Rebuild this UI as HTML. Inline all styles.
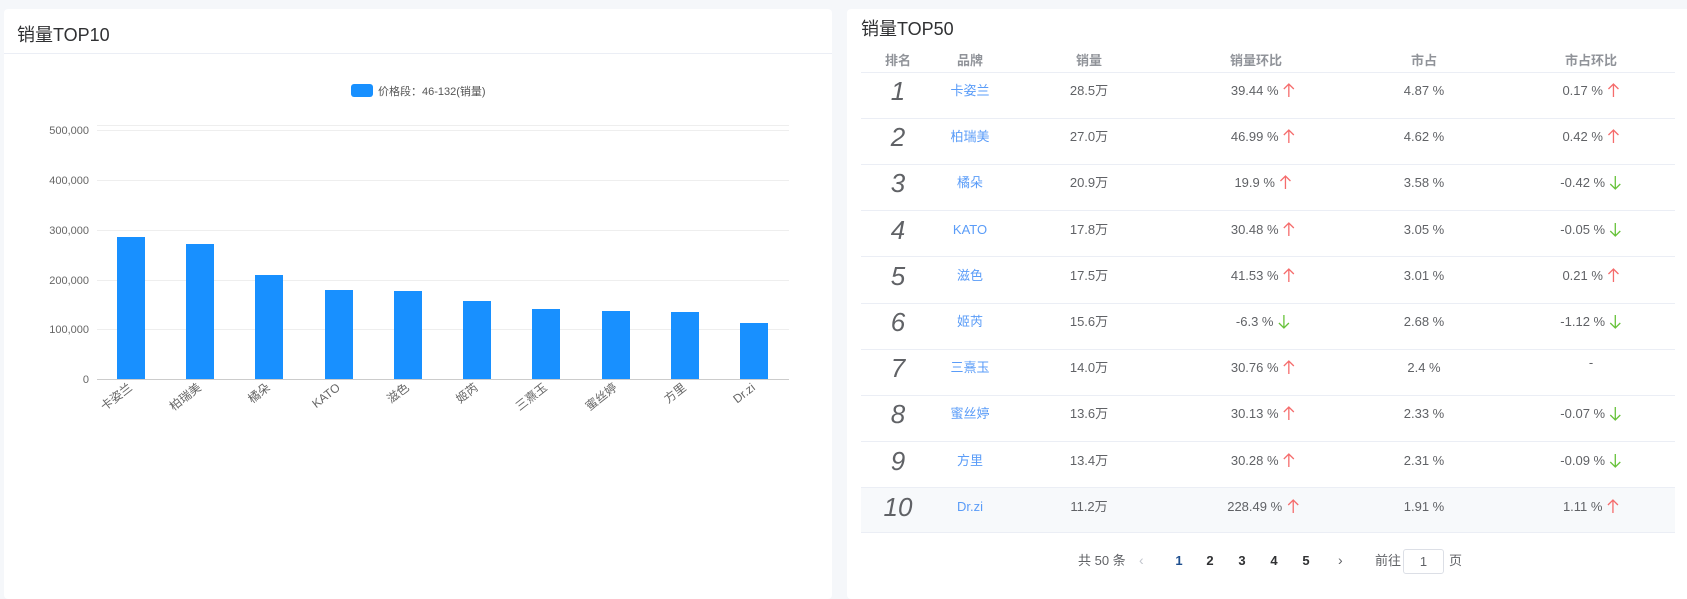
<!DOCTYPE html>
<html><head><meta charset="utf-8"><style>
*{margin:0;padding:0;box-sizing:border-box}
body{width:1687px;height:590px;background:#f5f7fa;font-family:"Liberation Sans","Noto Sans CJK SC",sans-serif;position:relative;overflow:hidden;color:#606266}
.card{position:absolute;background:#fff;border-radius:4px}
.a{position:absolute;white-space:nowrap}
.c{transform:translateX(-50%)}
.hd{color:#909399;font-size:13px;font-weight:bold;top:50px}
.row{position:absolute;left:861px;width:814px;height:46px;border-bottom:1px solid #ebeef5}
.rk{font-style:italic;font-size:26px;color:#606266}
.br{color:#5a9cf8;font-size:13px;line-height:16px;height:16px}
.t{font-size:13px;color:#606266;line-height:16px;height:16px}
svg.ar{vertical-align:-3px;margin-left:1px}
</style></head><body>
<div class="card" style="left:4px;top:9px;width:828px;height:590px">
<div class="a" style="left:13px;top:12px;font-size:18px;color:#303133">销量TOP10</div>
<div style="position:absolute;left:0;top:44px;width:828px;border-top:1px solid #ebeef5"></div>
</div>
<svg class="a" style="left:0;top:0" width="840" height="590">
<rect x="351" y="84" width="22" height="13" rx="3" fill="#1890ff"/>
<text x="378" y="95" font-size="11" fill="#555" font-family="Liberation Sans,Noto Sans CJK SC,sans-serif">价格段：46-132(销量)</text>
<g stroke="#eee" stroke-width="1">
<line x1="97" y1="130.5" x2="789" y2="130.5"/><line x1="97" y1="180.5" x2="789" y2="180.5"/><line x1="97" y1="230.5" x2="789" y2="230.5"/><line x1="97" y1="280.5" x2="789" y2="280.5"/><line x1="97" y1="329.5" x2="789" y2="329.5"/>
<line x1="97" y1="125.5" x2="789" y2="125.5"/>
</g>
<line x1="97" y1="379.5" x2="789" y2="379.5" stroke="#ccc"/>
<g font-size="11" fill="#666" text-anchor="end" font-family="Liberation Sans,sans-serif">
<text x="89" y="134">500,000</text><text x="89" y="184">400,000</text><text x="89" y="234">300,000</text><text x="89" y="284">200,000</text><text x="89" y="333">100,000</text><text x="89" y="383">0</text>
</g>
<g fill="#1890ff">
<rect x="117" y="237" width="28" height="142"/>
<rect x="186" y="244" width="28" height="135"/>
<rect x="255" y="275" width="28" height="104"/>
<rect x="325" y="290" width="28" height="89"/>
<rect x="394" y="291" width="28" height="88"/>
<rect x="463" y="301" width="28" height="78"/>
<rect x="532" y="309" width="28" height="70"/>
<rect x="602" y="311" width="28" height="68"/>
<rect x="671" y="312" width="28" height="67"/>
<rect x="740" y="323" width="28" height="56"/>
</g>
<g font-size="12" fill="#666" text-anchor="end" font-family="Liberation Sans,Noto Sans CJK SC,sans-serif">
<text transform="translate(133,389) rotate(-38)">卡姿兰</text>
<text transform="translate(202,389) rotate(-38)">柏瑞美</text>
<text transform="translate(271,389) rotate(-38)">橘朵</text>
<text transform="translate(341,389) rotate(-38)">KATO</text>
<text transform="translate(410,389) rotate(-38)">滋色</text>
<text transform="translate(479,389) rotate(-38)">姬芮</text>
<text transform="translate(548,389) rotate(-38)">三熹玉</text>
<text transform="translate(618,389) rotate(-38)">蜜丝婷</text>
<text transform="translate(687,389) rotate(-38)">方里</text>
<text transform="translate(756,389) rotate(-38)">Dr.zi</text>
</g>
</svg>

<div class="card" style="left:847px;top:9px;width:845px;height:590px"></div>
<div class="a" style="left:861px;top:15px;font-size:18px;color:#303133">销量TOP50</div>
<div class="a hd c" style="left:898px">排名</div>
<div class="a hd c" style="left:970px">品牌</div>
<div class="a hd c" style="left:1089px">销量</div>
<div class="a hd c" style="left:1256px">销量环比</div>
<div class="a hd c" style="left:1424px">市占</div>
<div class="a hd c" style="left:1591px">市占环比</div>
<div style="position:absolute;left:861px;top:72px;width:814px;border-top:1px solid #ebeef5"></div>

<div class="row" style="top:73px"></div>
<div class="row" style="top:119px"></div>
<div class="row" style="top:165px"></div>
<div class="row" style="top:211px"></div>
<div class="row" style="top:258px"></div>
<div class="row" style="top:304px"></div>
<div class="row" style="top:350px"></div>
<div class="row" style="top:396px"></div>
<div class="row" style="top:442px"></div>
<div class="row" style="top:488px;background:#f7f9fb;height:45px"></div>

<div id="rows"></div>
<script>
var d=[["1","卡姿兰","28.5万","39.44 %",1,"4.87 %","0.17 %",1],["2","柏瑞美","27.0万","46.99 %",1,"4.62 %","0.42 %",1],["3","橘朵","20.9万","19.9 %",1,"3.58 %","-0.42 %",0],["4","KATO","17.8万","30.48 %",1,"3.05 %","-0.05 %",0],["5","滋色","17.5万","41.53 %",1,"3.01 %","0.21 %",1],["6","姬芮","15.6万","-6.3 %",0,"2.68 %","-1.12 %",0],["7","三熹玉","14.0万","30.76 %",1,"2.4 %","-",2],["8","蜜丝婷","13.6万","30.13 %",1,"2.33 %","-0.07 %",0],["9","方里","13.4万","30.28 %",1,"2.31 %","-0.09 %",0],["10","Dr.zi","11.2万","228.49 %",1,"1.91 %","1.11 %",1]];
function ar(v){
 if(v==1)return '<svg class="ar" width="12" height="15" viewBox="0 0 12 15"><path d="M6 14V1M1 6l5-5 5 5" fill="none" stroke="#f56c6c" stroke-width="1.3"/></svg>';
 if(v==0)return '<svg class="ar" width="12" height="15" viewBox="0 0 12 15"><path d="M6 1v13M1 9l5 5 5-5" fill="none" stroke="#67c23a" stroke-width="1.3"/></svg>';
 return '';}
var h="";
for(var i=0;i<10;i++){var r=d[i],y=92+i*46.2,ty=y-9;
h+='<div class="a c rk" style="left:898px;top:'+(y-16)+'px">'+r[0]+'</div>';
h+='<div class="a c br" style="left:970px;top:'+ty+'px">'+r[1]+'</div>';
h+='<div class="a c t" style="left:1089px;top:'+ty+'px">'+r[2]+'</div>';
h+='<div class="a c t" style="left:1263px;top:'+ty+'px">'+r[3]+' '+ar(r[4])+'</div>';
h+='<div class="a c t" style="left:1424px;top:'+ty+'px">'+r[5]+'</div>';
h+='<div class="a c t" style="left:1591px;top:'+(r[7]==2?ty-5:ty)+'px">'+r[6]+' '+ar(r[7])+'</div>';}
document.getElementById("rows").innerHTML=h;
</script>

<div class="a t" style="left:1078px;top:553px">共 50 条</div>
<div class="a" style="left:1139px;top:552px;color:#c0c4cc;font-size:14px">‹</div>
<div class="a c" style="left:1179px;top:553px;font-size:13px;font-weight:bold;color:#1f4f8f">1</div>
<div class="a c" style="left:1210px;top:553px;font-size:13px;font-weight:bold;color:#303133">2</div>
<div class="a c" style="left:1242px;top:553px;font-size:13px;font-weight:bold;color:#303133">3</div>
<div class="a c" style="left:1274px;top:553px;font-size:13px;font-weight:bold;color:#303133">4</div>
<div class="a c" style="left:1306px;top:553px;font-size:13px;font-weight:bold;color:#303133">5</div>
<div class="a" style="left:1338px;top:552px;color:#606266;font-size:14px">›</div>
<div class="a t" style="left:1375px;top:553px">前往</div>
<div class="a" style="left:1403px;top:549px;width:41px;height:25px;border:1px solid #dcdfe6;border-radius:3px;text-align:center;font-size:13px;line-height:23px">1</div>
<div class="a t" style="left:1449px;top:553px">页</div>
</body></html>
